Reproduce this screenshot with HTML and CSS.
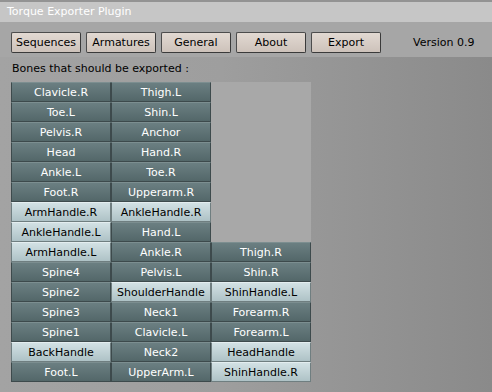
FILE: index.html
```html
<!DOCTYPE html>
<html lang="en">
<head>
  <meta charset="UTF-8">
  <title>Torque Exporter Plugin</title>
  <link rel="stylesheet" href="styles.css">
</head>
<body>
  <div class="window">
    <div class="titlebar">Torque Exporter Plugin</div>
    <div class="toolbar">
      <button class="tab">Sequences</button>
      <button class="tab">Armatures</button>
      <button class="tab">General</button>
      <button class="tab">About</button>
      <button class="tab">Export</button>
      <span class="version">Version 0.9</span>
    </div>
    <div class="content">
      <p class="label">Bones that should be exported :</p>
      <div class="bones">
        <div class="bone">Clavicle.R</div><div class="bone">Thigh.L</div><div class="empty"></div>
        <div class="bone">Toe.L</div><div class="bone">Shin.L</div><div class="empty"></div>
        <div class="bone">Pelvis.R</div><div class="bone">Anchor</div><div class="empty"></div>
        <div class="bone">Head</div><div class="bone">Hand.R</div><div class="empty"></div>
        <div class="bone">Ankle.L</div><div class="bone">Toe.R</div><div class="empty"></div>
        <div class="bone">Foot.R</div><div class="bone">Upperarm.R</div><div class="empty"></div>
        <div class="bone on">ArmHandle.R</div><div class="bone on">AnkleHandle.R</div><div class="empty"></div>
        <div class="bone on">AnkleHandle.L</div><div class="bone">Hand.L</div><div class="empty"></div>
        <div class="bone on">ArmHandle.L</div><div class="bone">Ankle.R</div><div class="bone">Thigh.R</div>
        <div class="bone">Spine4</div><div class="bone">Pelvis.L</div><div class="bone">Shin.R</div>
        <div class="bone">Spine2</div><div class="bone on">ShoulderHandle</div><div class="bone on">ShinHandle.L</div>
        <div class="bone">Spine3</div><div class="bone">Neck1</div><div class="bone">Forearm.R</div>
        <div class="bone">Spine1</div><div class="bone">Clavicle.L</div><div class="bone">Forearm.L</div>
        <div class="bone on">BackHandle</div><div class="bone">Neck2</div><div class="bone on">HeadHandle</div>
        <div class="bone">Foot.L</div><div class="bone">UpperArm.L</div><div class="bone on">ShinHandle.R</div>
      </div>
    </div>
  </div>
</body>
</html>
```

FILE: styles.css
```css
body {
  margin: 0;
  font-family: "DejaVu Sans", sans-serif;
  font-size: 11px;
  background: #9a9a9a;
}

.window {
  width: 492px;
  height: 392px;
  overflow: hidden;
  background: linear-gradient(to right, #a3a3a3, #9e9e9e 45%, #8a8a8a);
}

.titlebar {
  height: 20px;
  border-top: 2px solid #939393;
  background: #c6c6c6;
  color: #ffffff;
  font-size: 11px;
  line-height: 20px;
  padding-left: 7px;
}

.toolbar {
  display: flex;
  align-items: flex-start;
  gap: 5px;
  height: 25px;
  padding: 10px 11px 0;
  background: #a6a6a6;
}

.tab {
  width: 70px;
  height: 21px;
  padding: 0;
  font-family: inherit;
  font-size: 11px;
  color: #000;
  background: linear-gradient(#e2d9d2, #cdc2ba);
  border: 1px solid #4c4c4c;
  border-right-color: #3a3a3a;
  border-bottom-color: #3a3a3a;
  border-radius: 2px;
}

.version {
  margin-left: 27px;
  line-height: 21px;
  white-space: nowrap;
  color: #000;
}

.content {
  padding: 0 11px;
}

.label {
  margin: 0;
  padding: 5px 0 0 1px;
  height: 20px;
  line-height: 13px;
  color: #000;
}

.bones {
  display: grid;
  grid-template-columns: repeat(3, 100px);
  grid-auto-rows: 20px;
  width: 300px;
  background: #a8a8a8;
}

.bone {
  box-sizing: border-box;
  display: flex;
  align-items: center;
  justify-content: center;
  color: #fff;
  background: linear-gradient(#6b7f82, #536769);
  border: 1px solid #3d4a4c;
  border-top-color: #7c8e90;
}

.bone.on {
  color: #000;
  background: linear-gradient(#d2e1e4, #aec2c6);
  border-color: #6f7e80;
  border-top-color: #e4eef0;
}
```
